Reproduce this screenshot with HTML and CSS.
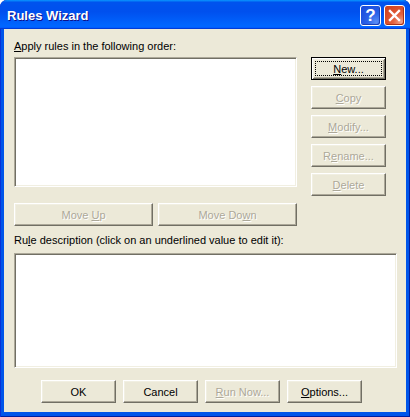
FILE: index.html
```html
<!DOCTYPE html>
<html>
<head>
<meta charset="utf-8">
<title>Rules Wizard</title>
<link rel="stylesheet" href="styles.css">
</head>
<body>
<div class="window">
  <div class="titlebar">
    <div class="title">Rules Wizard</div>
    <div class="tb-buttons">
      <div class="tb-btn help">?</div>
      <div class="tb-btn close">
        <svg width="13" height="13" viewBox="0 0 13 13"><path d="M2 2 L11 11 M11 2 L2 11" stroke="#fff" stroke-width="2.4" stroke-linecap="square" fill="none"/></svg>
      </div>
    </div>
  </div>
  <div class="client">
    <div class="label"><u>A</u>pply rules in the following order:</div>
    <div class="main">
      <div class="left">
        <div class="listbox"></div>
        <div class="moverow">
          <button class="btn wide" disabled>Move <u>U</u>p</button>
          <button class="btn wide" disabled>Move Do<u>w</u>n</button>
        </div>
      </div>
      <div class="side">
        <button class="btn default"><u>N</u>ew...</button>
        <button class="btn" disabled><u>C</u>opy</button>
        <button class="btn" disabled><u>M</u>odify...</button>
        <button class="btn" disabled>R<u>e</u>name...</button>
        <button class="btn" disabled><u>D</u>elete</button>
      </div>
    </div>
    <div class="label desc-label">Ru<u>l</u>e description (click on an underlined value to edit it):</div>
    <div class="descbox"></div>
    <div class="footer">
      <button class="btn">OK</button>
      <button class="btn">Cancel</button>
      <button class="btn" disabled><u>R</u>un Now...</button>
      <button class="btn"><u>O</u>ptions...</button>
    </div>
  </div>
</div>
</body>
</html>
```
FILE: styles.css
```css
html, body {
  margin: 0;
  padding: 0;
  background: #ffffff;
}
.window {
  width: 410px;
  height: 417px;
  display: flex;
  flex-direction: column;
  background: #0055ea;
  box-shadow: inset 1px 0 #0831d9, inset -1px 0 #001ea0, inset 0 -1px #001ea0;
  border-radius: 7px 7px 0 0;
  overflow: hidden;
}
.titlebar {
  height: 29px;
  flex: none;
  display: flex;
  align-items: center;
  justify-content: space-between;
  padding: 0 5px 0 7px;
  background: linear-gradient(180deg, #0997ff, #0053ee 8%, #0050ee 40%, #0066ff 88%, #0066ff 93%, #005bff 95%, #003dd7 96%, #003dd7);
  border-radius: 7px 7px 0 0;
}
.title {
  font-family: "Liberation Sans", Arial, sans-serif;
  font-weight: bold;
  font-size: 13px;
  color: #ffffff;
  text-shadow: 1px 1px #0f1089;
  padding-top: 1px;
}
.tb-buttons {
  display: flex;
  gap: 3px;
  padding-top: 2px;
}
.tb-btn {
  width: 19px;
  height: 19px;
  border: 1px solid #ffffff;
  border-radius: 3px;
  display: flex;
  align-items: center;
  justify-content: center;
}
.help {
  background: radial-gradient(circle at 80% 85%, #5a8df5 0, #2a62e8 40%, #1546d8 100%);
  box-shadow: inset -1px -1px #1c3fb5;
  color: #ffffff;
  font-family: "Liberation Sans", Arial, sans-serif;
  font-weight: bold;
  font-size: 17px;
  line-height: 19px;
}
.close {
  background: radial-gradient(circle at 85% 85%, #f0a48a 0, #e2613e 35%, #d84b27 70%, #c8401f 100%);
  box-shadow: inset -1px -1px #a93218;
}
.client {
  flex: 1;
  margin: 0 4px 5px 4px;
  background: #ece9d8;
  padding: 11px 9px 9px 10px;
  font-family: "Liberation Sans", Arial, sans-serif;
  font-size: 11px;
  color: #000000;
}
.label {
  height: 13px;
  line-height: 13px;
  margin-bottom: 4px;
  white-space: nowrap;
}
.main {
  display: flex;
  gap: 14px;
}
.left {
  width: 283px;
  display: flex;
  flex-direction: column;
}
.listbox, .descbox {
  box-sizing: border-box;
  background: #ffffff;
  border: 1px solid;
  border-color: #aca899 #ffffff #ffffff #aca899;
  box-shadow: inset 1px 1px #716f64, inset -1px -1px #f1efe2;
}
.listbox {
  height: 130px;
}
.moverow {
  display: flex;
  gap: 5px;
  margin-top: 16px;
}
.side {
  width: 75px;
  display: flex;
  flex-direction: column;
  gap: 6px;
}
.btn {
  box-sizing: border-box;
  width: 75px;
  height: 23px;
  padding: 0;
  margin: 0;
  background: #ece9d8;
  border: 1px solid;
  border-color: #ffffff #716f64 #716f64 #ffffff;
  box-shadow: inset -1px -1px #aca899, inset 1px 1px #f1efe2;
  font-family: "Liberation Sans", Arial, sans-serif;
  font-size: 11px;
  color: #000000;
  position: relative;
}
.btn.wide {
  width: 139px;
}
.btn:disabled {
  color: #aca899;
  text-shadow: 1px 1px #ffffff;
}
.btn.default {
  border: 1px solid #000000;
  box-shadow: inset 1px 1px #ffffff, inset -1px -1px #716f64, inset 2px 2px #f1efe2, inset -2px -2px #aca899;
}
.btn.default::after {
  content: "";
  position: absolute;
  left: 3px;
  top: 3px;
  right: 3px;
  bottom: 3px;
  border: 1px dotted #000000;
}
.desc-label {
  margin-top: 8px;
  margin-bottom: 6px;
}
.descbox {
  height: 115px;
}
.footer {
  display: flex;
  gap: 7px;
  margin-top: 12px;
  padding-left: 27px;
}
```
